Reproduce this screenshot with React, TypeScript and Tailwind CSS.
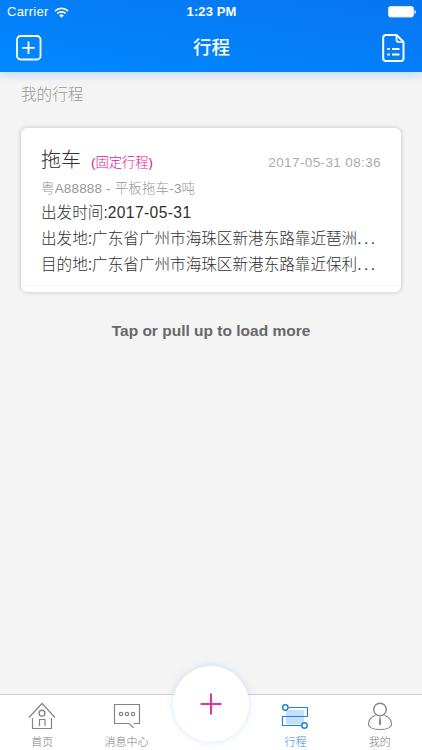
import React from "react";

interface Tab {
  id: string;
  label: string;
  icon: React.ReactNode;
  active?: boolean;
}

interface Trip {
  id: string;
  title: string;
  type: string;
  createdAt: string;
  vehicle: string;
  departure: string;
  places: string[];
}

const trips: Trip[] = [
  {
    id: "1",
    title: "拖车",
    type: "(固定行程)",
    createdAt: "2017-05-31 08:36",
    vehicle: "粤A88888 - 平板拖车-3吨",
    departure: "2017-05-31",
    places: [
      "出发地:广东省广州市海珠区新港东路靠近琶洲",
      "目的地:广东省广州市海珠区新港东路靠近保利",
    ],
  },
];

function HomeIcon() {
  return (
    <svg width="28" height="28" viewBox="0 0 28 28" fill="none" stroke="#858585" strokeWidth="1.2">
      <path d="M1 15.5 14 1.5l13 14" />
      <path d="M4.500 16v10.500h19V16M11.500 24v-6.500h5.500V24" />
      <circle cx="14" cy="11.200" r="2.900" strokeWidth="1.400" />
    </svg>
  );
}

function MessageIcon() {
  return (
    <svg width="28" height="28" viewBox="0 0 28 28" fill="none" stroke="#858585" strokeWidth="1.2">
      <path d="M20.500 21.500h6v-19h-25v19h14.500l4.500 4.200" />
      <circle cx="8" cy="12" r="1.700" />
      <circle cx="14" cy="12" r="1.700" />
      <circle cx="20" cy="12" r="1.700" />
    </svg>
  );
}

function TripIcon() {
  return (
    <svg width="28" height="28" viewBox="0 0 28 28" fill="none" stroke="#2380df" strokeWidth="1.2">
      <path d="M5 8h18v14.500h-18z" fill="#c3dffb" stroke="none" />
      <path d="M7.500 5.500h19v9h-25v9h19" />
      <circle cx="4.300" cy="5.500" r="2.700" fill="#fff" strokeWidth="1.500" />
      <circle cx="23.500" cy="23.500" r="2.700" fill="#fff" strokeWidth="1.500" />
    </svg>
  );
}

function UserIcon() {
  return (
    <svg width="28" height="28" viewBox="0 0 28 28" fill="none" stroke="#858585" strokeWidth="1.1">
      <circle cx="14" cy="7.500" r="6.300" strokeWidth="1.400" />
      <path d="M9.500 13.300C5.500 15 2.500 18.500 2.500 22c0 3.500 5 5.500 11.500 5.500s11.500-2 11.500-5.500c0-3.500-3-7-7-8.700" />
      <path d="M14 15.200 13.300 21l.7 1.700.7-1.700z" />
    </svg>
  );
}

const tabs: Tab[] = [
  { id: "home", label: "首页", icon: <HomeIcon /> },
  { id: "message", label: "消息中心", icon: <MessageIcon /> },
  { id: "add", label: "", icon: null },
  { id: "trip", label: "行程", icon: <TripIcon />, active: true },
  { id: "user", label: "我的", icon: <UserIcon /> },
];

function StatusBar() {
  return (
    <div className="grid h-6 grid-cols-3 items-center pl-[7px] pr-[6px] text-[13px]">
      <div className="flex items-center gap-[6px]">
        <span className="tracking-[0.25px]">Carrier</span>
        <svg width="15" height="11" viewBox="0 0 15 11" fill="none" stroke="#fff" strokeWidth="1.700">
          <path d="M1 4.100a9.300 9.300 0 0 1 13 0M3.300 6.500a6 6 0 0 1 8.400 0" />
          <path d="M5.200 8.400a3.300 3.300 0 0 1 4.600 0L7.500 10.800z" fill="#fff" stroke="none" />
        </svg>
      </div>
      <span className="text-center font-bold tracking-[0.1px]">1:23 PM</span>
      <svg className="justify-self-end" width="28" height="12" viewBox="0 0 28 12">
        <rect x="0.500" y="0.500" width="25" height="10.500" rx="2" fill="#fff" stroke="#cfe4ff" />
        <path d="M26.500 4q1.500.3 1.500 2t-1.500 2z" fill="#fff" />
      </svg>
    </div>
  );
}

function Header() {
  return (
    <header className="h-[72px] bg-linear-to-tr from-[#0089ff] to-[#0875f0] text-white shadow-[0_3px_9px_rgba(0,122,255,0.22)]">
      <StatusBar />
      <div className="flex h-12 items-center justify-between pl-4 pr-[17px]">
        <svg width="26" height="26" viewBox="0 0 26 26" fill="none" stroke="#fff" strokeWidth="1.800">
          <rect x="1" y="1" width="23.500" height="23.500" rx="3.500" />
          <path d="M12.500 6.500v12.600M6.200 12.800h12.600" />
        </svg>
        <h1 className="pr-px text-[18.500px] font-medium">行程</h1>
        <svg width="23" height="28" viewBox="0 0 23 28" fill="none" stroke="#fff" strokeWidth="2">
          <path d="M14.500 1H4Q1.200 1 1.200 3.800v20.400Q1.200 27 4 27h15q2.500 0 2.500-2.800V8z" strokeLinejoin="round" />
          <path d="M14.500 1v4.500Q14.500 8 17 8h4.500" strokeWidth="1.700" />
          <path d="M5.300 15h2.500M5.300 20.400h2.500M10 15h7.500M10 20.400h7.500" />
        </svg>
      </div>
    </header>
  );
}

function TripCard({ trip }: { trip: Trip }) {
  return (
    <article className="h-[164px] overflow-hidden rounded-[6px] bg-white px-5 pt-4 text-[#303030] shadow-[0_0_4px_rgba(0,0,0,0.22)]">
      <div className="flex h-8 items-center justify-between">
        <div className="flex items-center">
          <h2 className="text-[20px] font-light">{trip.title}</h2>
          <span className="ml-[10px] mt-[6px] text-[13.300px] font-light text-[#e0109a]">{trip.type}</span>
        </div>
        <time className="mt-[6px] text-[13.500px] tracking-[0.38px] text-[#ababab]">{trip.createdAt}</time>
      </div>
      <p className="flex h-6 items-center whitespace-pre pt-[2px] text-[13.500px] font-light tracking-[0.16px] text-[#979797]">
        {trip.vehicle}
      </p>
      <p className="h-[26px] text-[15.600px] font-light leading-[26px]">
        出发时间:<span className="tracking-[0.4px]">{trip.departure}</span>
      </p>
      {trip.places.map((place) => (
        <p key={place} className="h-[26px] whitespace-nowrap text-[15.600px] font-light leading-[26px]">
          {place}
          <span className="tracking-[2.400px]">...</span>
        </p>
      ))}
      <div className="-mx-5 mt-[7px] h-px bg-[#f5f5f5]" />
    </article>
  );
}

function TabBar() {
  return (
    <nav className="relative grid h-14 grid-cols-5 border-t border-[#cfcfcf] bg-white">
      {tabs.map((tab) => (
        <button
          key={tab.id}
          className={`flex flex-col items-center pt-[7px] text-[11px] leading-[15px] ${
            tab.active ? "text-[#1f82ec]" : "text-[#7c7c7c]"
          }`}
        >
          {tab.icon}
          <span className="mt-[5px] font-light">{tab.label}</span>
        </button>
      ))}
      {/* Floating add button */}
      <button className="absolute left-1/2 top-[-29px] flex size-[76px] -translate-x-1/2 items-center justify-center rounded-full bg-white shadow-[0_0_9px_rgba(0,110,240,0.16)]">
        <svg width="22" height="22" viewBox="0 0 22 22" fill="none" stroke="#e0359d" strokeWidth="2">
          <path d="M11 0.500v21M0.500 11h21" />
        </svg>
      </button>
    </nav>
  );
}

export default function App() {
  return (
    <div className="flex h-[750px] w-[422px] flex-col overflow-hidden bg-[#f4f4f4] font-['Liberation_Sans','Noto_Sans_CJK_SC',sans-serif]">
      <Header />
      <main className="flex-1 px-[21px]">
        <p className="pt-[11px] text-[15.600px] font-light leading-6 text-[#989898]">我的行程</p>
        <div className="pt-[21px]">
          {trips.map((trip) => (
            <TripCard key={trip.id} trip={trip} />
          ))}
        </div>
        <p className="pt-[27px] text-center text-[15.500px] font-bold leading-6 text-[#686868]">
          Tap or pull up to load more
        </p>
      </main>
      <TabBar />
    </div>
  );
}
